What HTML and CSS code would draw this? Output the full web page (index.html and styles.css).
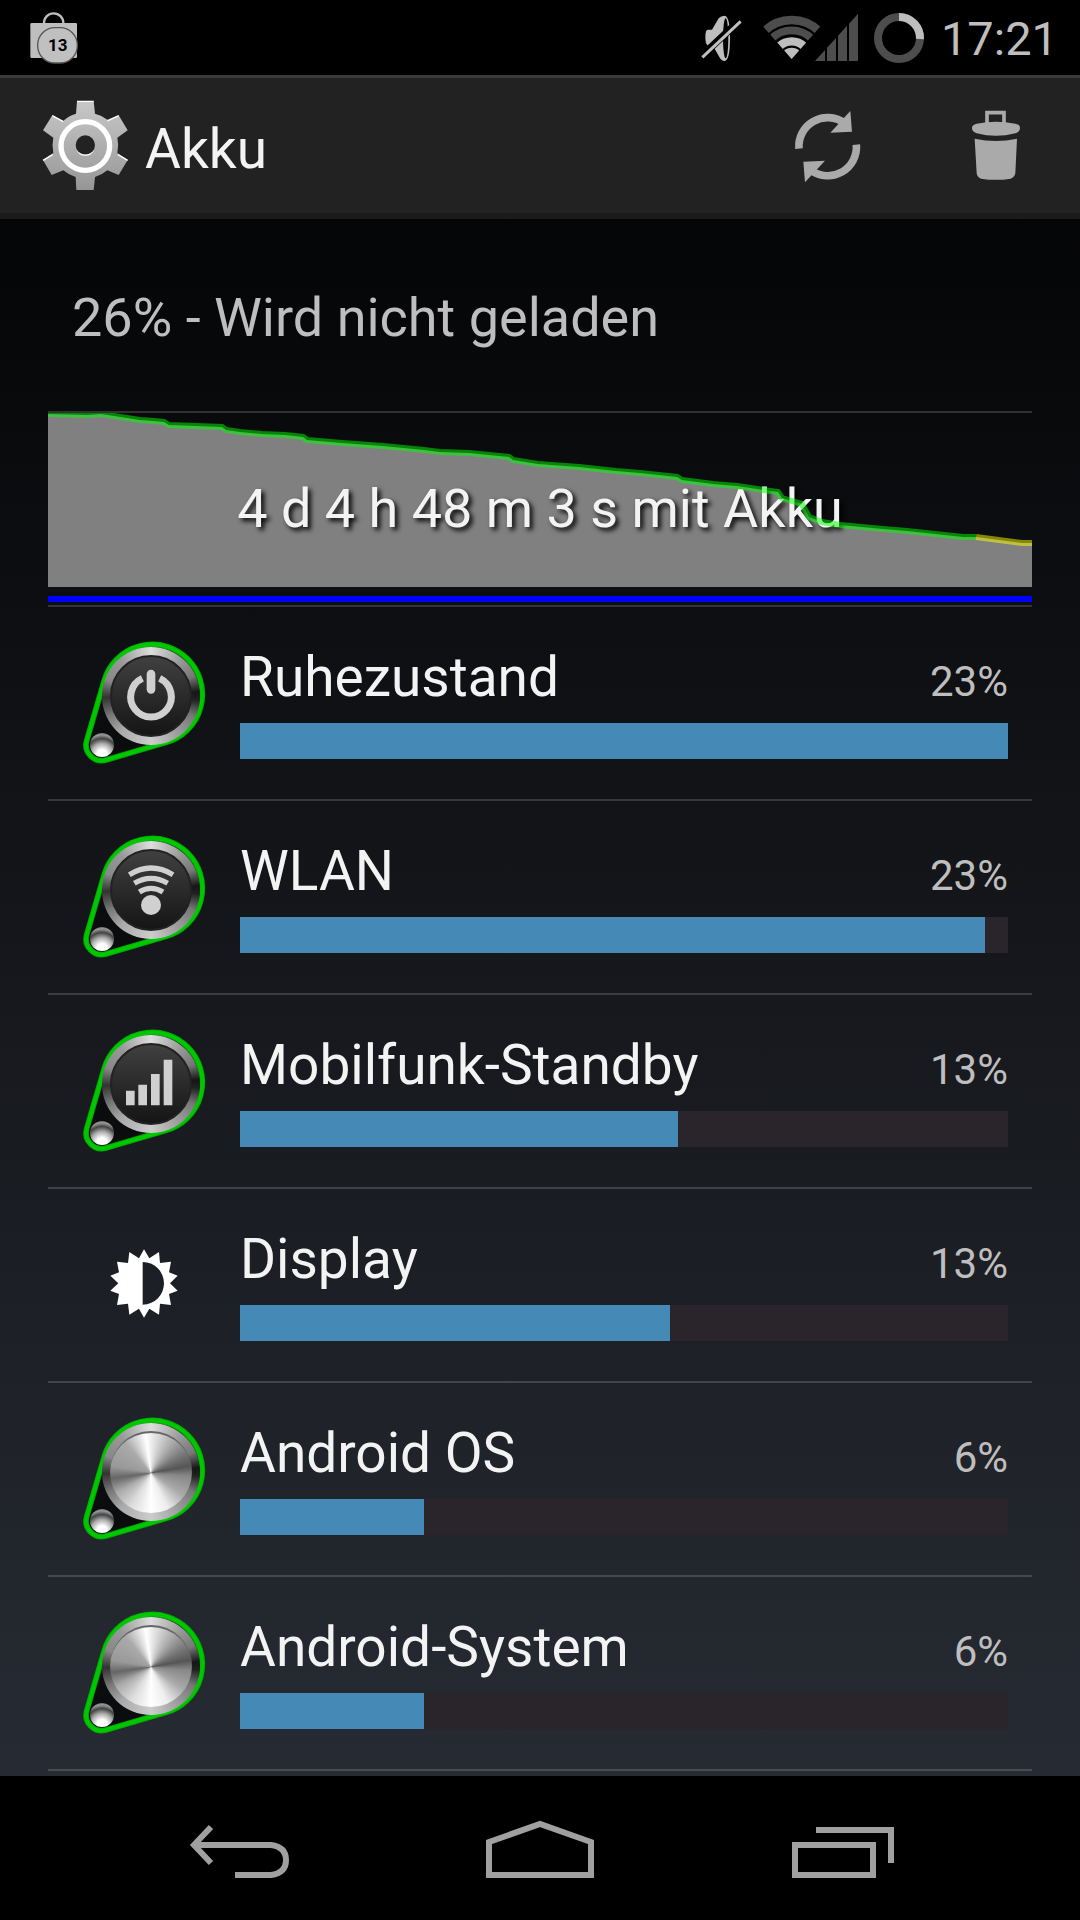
FILE: index.html
```html
<!DOCTYPE html>
<html lang="de">
<head>
  <meta charset="utf-8">
  <meta name="viewport" content="width=device-width, initial-scale=1">
  <title>Akku</title>
  <link rel="stylesheet" href="styles.css">
</head>
<body>
  <!-- shared shapes -->
  <svg class="defs" aria-hidden="true">
    <defs>
      <symbol id="outline" viewBox="60 51 390 390">
        <path d="M133 181A150 150 0 1 1 319 367L138 420A47 47 0 0 1 80 362Z" fill="#0b0c0e" stroke="#0a0" stroke-width="17"/>
        <path d="M133 181A150 150 0 1 1 319 367L138 420A47 47 0 0 1 80 362Z" fill="none" stroke="#00c800" stroke-width="11"/>
      </symbol>
    </defs>
  </svg>

  <header class="status">
    <div class="notification">
      <svg viewBox="87 30 150 162" width="50" height="54" aria-hidden="true">
        <path d="M132 70V66A28 28 0 0 1 190 66V70" fill="none" stroke="#bebebe" stroke-width="7"/>
        <rect x="91" y="66" width="140" height="105" rx="4" fill="#bebebe"/>
        <rect x="113" y="80" width="119" height="106" rx="52" fill="#c0c0c0" stroke="#555" stroke-width="4"/>
      </svg>
      <span class="count">13</span>
    </div>
    <svg class="mute" viewBox="66 36 120 150" width="40" height="50" aria-hidden="true">
      <path d="M76 108Q76 86 84 86H96L116 52Q122 44 134 44Q150 46 150 112Q150 178 134 180Q124 180 118 168L102 140L92 134H84Q76 130 76 108Z" fill="#bebebe"/>
      <ellipse cx="137" cy="112" rx="8" ry="60"/>
      <path d="M64 166L180 57" stroke="#000" stroke-width="22"/>
      <path d="M67 169L182 61" stroke="#bebebe" stroke-width="9"/>
    </svg>
    <svg class="network" viewBox="246 36 288 150" width="96" height="50" aria-hidden="true">
      <clipPath id="fan"><path d="M335 174L208 30H462Z"/></clipPath>
      <g clip-path="url(#fan)" fill="none">
        <circle cx="335" cy="174" r="117" stroke="#4d4d4d" stroke-width="26"/>
        <circle cx="335" cy="174" r="86" stroke="#4d4d4d" stroke-width="23"/>
        <circle cx="335" cy="174" r="53" stroke="#bebebe" stroke-width="25"/>
        <circle cx="335" cy="174" r="34" fill="#bebebe"/>
      </g>
      <path d="M405 180L435 147V180ZM441 180V140L468 111V180ZM474 180V104L501 74V180ZM507 180V68L534 38V180Z" fill="#4d4d4d"/>
    </svg>
    <svg class="battery" viewBox="582 33 150 150" width="50" height="50" aria-hidden="true">
      <circle cx="657" cy="108" r="63" fill="none" stroke="#4d4d4d" stroke-width="24"/>
      <path d="M657 45A63 63 0 0 1 720 111" fill="none" stroke="#bebebe" stroke-width="24"/>
    </svg>
    <time class="clock">17:21</time>
  </header>

  <div class="actionbar">
    <svg class="gear" viewBox="126 300 261 282" width="87" height="94" aria-hidden="true">
      <linearGradient id="steel" x1="0" y1="0" x2="0" y2="1">
        <stop offset="0" stop-color="#c8c8c8"/>
        <stop offset="1" stop-color="#969696"/>
      </linearGradient>
      <path fill="url(#steel)" fill-rule="evenodd" d="M231 306H281L285 344Q306 349 322 362L356 349L383 394L352 416Q357 438 352 462L383 483L356 528L322 514Q306 528 285 534L281 573H229L227 534Q206 528 190 514L155 528L129 483L160 462Q155 438 160 416L129 394L157 349L190 366Q206 350 228 344ZM256 409A29 29 0 1 0 256 467A29 29 0 1 0 256 409Z"/>
      <path d="M231 307H281M322 366L356 350M190 368L157 350M129 484L158 467M383 484L354 467" stroke="#fff" stroke-width="4" fill="none"/>
      <circle cx="256" cy="441" r="73" fill="none" stroke="#fff" stroke-width="16"/>
      <path d="M229 452A29 29 0 0 0 283 452A32 32 0 0 1 229 452Z" fill="#fff"/>
    </svg>
    <h1>Akku</h1>
    <button class="action" type="button" aria-label="Aktualisieren">
      <svg viewBox="345 330 204 222" width="68" height="74" fill="#aaa">
        <g id="half">
          <path d="M360 449A86 86 0 0 1 496 372" fill="none" stroke="#aaa" stroke-width="23"/>
          <path d="M514 336L519 398L454 401Z"/>
        </g>
        <use href="#half" transform="rotate(180 446 443)"/>
      </svg>
    </button>
    <button class="action" type="button" aria-label="Löschen">
      <svg viewBox="872 327 156 222" width="52" height="74" fill="#aaa">
        <path d="M923 372V338H974V372" fill="none" stroke="#aaa" stroke-width="11"/>
        <path d="M878 384Q878 374 892 371Q950 360 1008 371Q1022 374 1022 384Q1022 395 1008 400Q950 415 892 400Q878 395 878 384Z"/>
        <path d="M886 416Q950 430 1013 416L1008 520Q1006 532 994 536Q950 543 905 536Q893 532 892 520Z"/>
      </svg>
    </button>
  </div>

  <main>
    <p class="summary">26% - Wird nicht geladen</p>

    <section class="chart">
      <svg viewBox="0 0 984 192" preserveAspectRatio="none" aria-hidden="true">
        <path fill="#808080" d="M0 174V1L40 2L53 1L92 7L106 8L116 9L121 12L174 14L178 17L192 19L214 21L237 22L255 24L259 27L294 30L335 33L376 37L392 39L421 40L461 44L465 47L490 51L531 54L568 58L592 60L629 64L634 67L665 71L689 73L730 79L734 85L754 91L761 104L774 109L792 112L835 116L859 118L915 124L928 124L974 130H984V174Z"/>
        <rect y="183" width="984" height="6" fill="#00f"/>
      </svg>
      <p>4 d 4 h 48 m 3 s mit Akku</p>
      <svg class="level" viewBox="0 0 984 192" preserveAspectRatio="none" aria-hidden="true">
        <path stroke="#0f0" d="M0 1L40 2L53 1L92 7L106 8L116 9L121 12L174 14L178 17L192 19L214 21L237 22L255 24L259 27L294 30L335 33L376 37L392 39L421 40L461 44L465 47L490 51L531 54L568 58L592 60L629 64L634 67L665 71L689 73L730 79L734 85L754 91L761 104L774 109L792 112L835 116L859 118L915 124L928 124"/>
        <path stroke="#ff0" d="M928 124L974 130H984"/>
      </svg>
    </section>

    <ul class="usage">
      <li>
        <div class="knob">
          <svg><use href="#outline"/></svg>
          <i class="ring"></i><i class="disc dark"></i><i class="ball"></i>
          <svg viewBox="60 51 390 390">
            <path d="M247 175A61 61 0 1 0 299 175" fill="none" stroke="#d0d0d0" stroke-width="21"/>
            <path d="M273 162V208" stroke="#d0d0d0" stroke-width="26" stroke-linecap="round"/>
          </svg>
        </div>
        <div class="info">
          <div class="line"><span class="name">Ruhezustand</span><span class="percent">23%</span></div>
          <div class="bar"><div class="fill" style="width: 100%"></div></div>
        </div>
      </li>
      <li>
        <div class="knob">
          <svg><use href="#outline"/></svg>
          <i class="ring"></i><i class="disc dark"></i><i class="ball"></i>
          <svg viewBox="60 51 390 390" fill="none" stroke="#d0d0d0" stroke-width="16">
            <path d="M208 182Q273 142 339 182M223 208Q273 178 323 208M238 234Q273 212 309 234"/>
            <circle cx="273" cy="273" r="30" fill="#d0d0d0" stroke="none"/>
          </svg>
        </div>
        <div class="info">
          <div class="line"><span class="name">WLAN</span><span class="percent">23%</span></div>
          <div class="bar"><div class="fill" style="width: 97%"></div></div>
        </div>
      </li>
      <li>
        <div class="knob">
          <svg><use href="#outline"/></svg>
          <i class="ring"></i><i class="disc dark"></i><i class="ball"></i>
          <svg viewBox="60 51 390 390" fill="#d0d0d0">
            <path d="M198 248H224V292H198ZM235 230H261V292H235ZM273 198H299V292H273ZM311 155H337V292H311Z"/>
          </svg>
        </div>
        <div class="info">
          <div class="line"><span class="name">Mobilfunk-Standby</span><span class="percent">13%</span></div>
          <div class="bar"><div class="fill" style="width: 57%"></div></div>
        </div>
      </li>
      <li>
        <div class="knob">
          <svg viewBox="60 29 390 390">
            <path fill="#fff" fill-rule="evenodd" d="M252 120L268 147L297 128L300 161L333 157L327 189L353 199L330 222L353 244L327 254L333 287L300 283L297 316L268 298L252 325L237 298L208 316L204 283L171 287L177 254L151 244L175 222L151 199L177 189L171 157L204 161L208 128L237 147ZM248 158V286A64 64 0 0 0 248 158Z"/>
          </svg>
        </div>
        <div class="info">
          <div class="line"><span class="name">Display</span><span class="percent">13%</span></div>
          <div class="bar"><div class="fill" style="width: 56%"></div></div>
        </div>
      </li>
      <li>
        <div class="knob">
          <svg><use href="#outline"/></svg>
          <i class="ring"></i><i class="disc"></i><i class="ball"></i>
        </div>
        <div class="info">
          <div class="line"><span class="name">Android OS</span><span class="percent">6%</span></div>
          <div class="bar"><div class="fill" style="width: 24%"></div></div>
        </div>
      </li>
      <li>
        <div class="knob">
          <svg><use href="#outline"/></svg>
          <i class="ring"></i><i class="disc"></i><i class="ball"></i>
        </div>
        <div class="info">
          <div class="line"><span class="name">Android-System</span><span class="percent">6%</span></div>
          <div class="bar"><div class="fill" style="width: 24%"></div></div>
        </div>
      </li>
    </ul>
  </main>

  <nav class="navbar">
    <button type="button" aria-label="Zurück">
      <svg viewBox="186 1818 108 60" width="108" height="60">
        <path d="M211 1827L194 1845L211 1863M194 1845H271Q286 1847 286 1860Q286 1873 271 1875H235"/>
      </svg>
    </button>
    <button type="button" aria-label="Startseite">
      <svg viewBox="486 1818 108 60" width="108" height="60">
        <path d="M489 1842L540 1824L591 1842V1875H489Z"/>
      </svg>
    </button>
    <button type="button" aria-label="Letzte Apps">
      <svg viewBox="786 1818 108 60" width="108" height="60">
        <path d="M795 1845H873V1875H795ZM816 1830H891V1863"/>
      </svg>
    </button>
  </nav>
</body>
</html>
```
FILE: styles.css
```css
* {
  box-sizing: border-box;
}
body {
  margin: 0;
  min-height: 100vh;
  display: flex;
  flex-direction: column;
  background: linear-gradient(#000, #2a2e37);
  color: #f3f3f3;
  font-family: Roboto, sans-serif;
}
h1, p, ul {
  margin: 0;
  padding: 0;
  font-weight: 400;
}
button {
  display: flex;
  align-items: center;
  justify-content: center;
  padding: 0;
  border: 0;
  background: none;
}
svg {
  display: block;
  overflow: visible;
}
.defs {
  position: absolute;
  width: 0;
  height: 0;
}

/* status bar */
.status {
  display: flex;
  align-items: center;
  height: 75px;
  padding: 0 22px 0 29px;
  background: #000;
}
.notification {
  position: relative;
  margin-right: auto;
}
.count {
  position: absolute;
  top: 23px;
  left: 19px;
  font-size: 17px;
  line-height: 22px;
  font-weight: 700;
  color: #000;
}
.network {
  margin: 0 16px 0 20px;
}
.clock {
  margin-left: 17px;
  padding-top: 3px;
  font-size: 47px;
  line-height: 56px;
  color: #bebebe;
}

/* action bar */
.actionbar {
  display: flex;
  align-items: center;
  height: 144px;
  padding-left: 42px;
  background: #222;
  border-top: 3px solid #3a3a3a;
  border-bottom: 6px solid #1b1b1b;
}
.actionbar h1 {
  flex: 1;
  margin-left: 16px;
  padding-top: 6px;
  font-size: 55px;
  line-height: 64px;
}
.action {
  width: 168px;
  height: 100%;
}

main {
  flex: 1;
  padding: 0 48px;
}
.summary {
  padding: 67px 24px 61px;
  border-bottom: 2px solid rgba(255, 255, 255, 0.16);
  font-size: 54px;
  line-height: 64px;
  color: #bebebe;
}

/* battery history */
.chart {
  position: relative;
  display: flex;
  align-items: center;
  justify-content: center;
  height: 194px;
  border-bottom: 2px solid rgba(255, 255, 255, 0.16);
}
.chart svg {
  position: absolute;
  top: 0;
  left: 0;
  width: 100%;
  height: 100%;
  overflow: hidden;
}
.chart p {
  position: relative;
  font-size: 54px;
  line-height: 64px;
  text-shadow: 3px 3px 5px #000;
}
.level {
  fill: none;
  stroke-width: 6;
  stroke-opacity: 0.5;
}

/* usage list */
.usage {
  list-style: none;
}
.usage li {
  display: flex;
  align-items: flex-start;
  height: 194px;
  padding: 0 24px 0 32px;
  border-bottom: 2px solid rgba(255, 255, 255, 0.16);
}
.knob {
  position: relative;
  width: 130px;
  height: 130px;
  margin: 30px 30px 0 0;
}
.knob svg {
  position: absolute;
  width: 130px;
  height: 130px;
}
.knob i {
  position: absolute;
  border-radius: 50%;
}
.ring {
  left: 22px;
  top: 10px;
  width: 98px;
  height: 98px;
  background: conic-gradient(#ddd, #999 40deg, #777 65deg, #161616 85deg, #222 95deg, #777 115deg, #ccc 180deg, #aaa 220deg, #777 245deg, #333 268deg, #888 290deg, #999 320deg, #ddd);
}
.disc {
  left: 30px;
  top: 18px;
  width: 82px;
  height: 82px;
  border-top: 2px solid #666;
  background: conic-gradient(#eee, #aaa 35deg, #777 60deg, #555 80deg, #888 95deg, #aaa 125deg, #eee 155deg, #fff 180deg, #ddd 210deg, #aaa 240deg, #666 262deg, #999 280deg, #aaa 320deg, #fff 352deg, #eee);
}
.disc.dark {
  border: 2px solid #222;
  background: linear-gradient(#404040, #151515);
}
.ball {
  left: 10px;
  top: 96px;
  width: 24px;
  height: 24px;
  background: radial-gradient(circle at 50% 90%, #fff 20%, #aaa 45%, #444 65%, #999 80%, #222);
}
.info {
  flex: 1;
  padding-top: 38px;
}
.line {
  display: flex;
  align-items: baseline;
  justify-content: space-between;
  margin-bottom: 9px;
  line-height: 64px;
}
.name {
  font-size: 55px;
}
.percent {
  font-size: 42px;
  color: #bebebe;
}
.bar {
  height: 36px;
  background: #29252b;
}
.fill {
  height: 100%;
  background: #4589b7;
}

/* navigation */
.navbar {
  display: flex;
  justify-content: center;
  height: 144px;
  background: #000;
}
.navbar button {
  width: 300px;
}
.navbar svg {
  fill: none;
  stroke: #a0a0a0;
  stroke-width: 6;
}
```
